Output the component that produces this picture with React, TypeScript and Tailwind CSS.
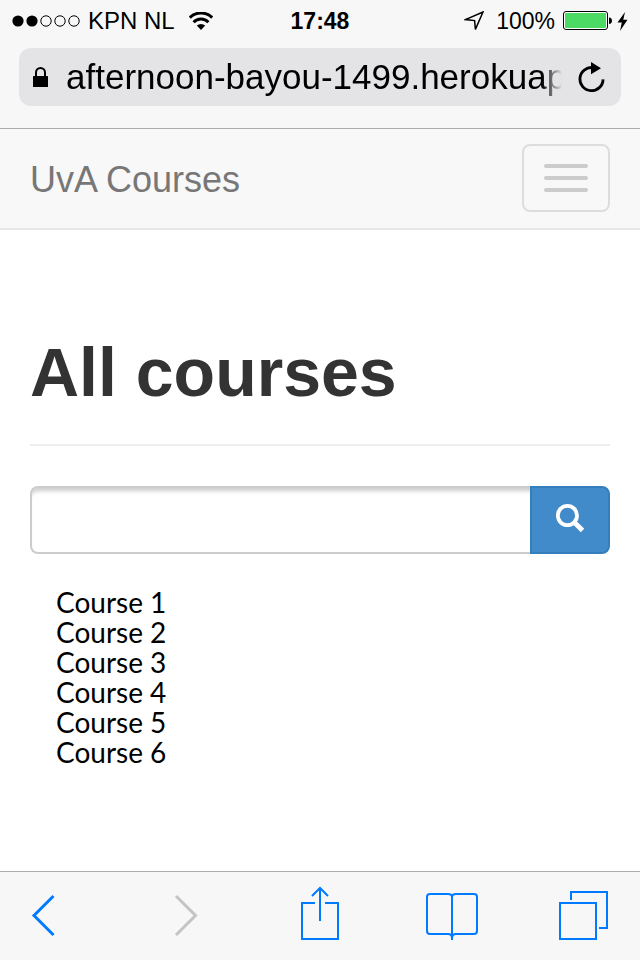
import React from "react";

const courses = ["Course 1", "Course 2", "Course 3", "Course 4", "Course 5", "Course 6"];

function SignalDots() {
  return (
    <svg width="68" height="12" viewBox="0 0 68 12" aria-hidden="true">
      <circle cx="6" cy="6" r="5.6" />
      <circle cx="20" cy="6" r="5.6" />
      <g fill="none" stroke="#000" strokeWidth="1">
        <circle cx="34" cy="6" r="5.2" />
        <circle cx="48" cy="6" r="5.2" />
        <circle cx="62" cy="6" r="5.2" />
      </g>
    </svg>
  );
}

function WifiIcon() {
  return (
    <svg width="24" height="18" viewBox="0 0 24 18" aria-hidden="true">
      <g fill="none" stroke="#000" strokeWidth="3">
        <path d="M0.8 5.6A16 16 0 0 1 23.2 5.6" />
        <path d="M4.6 10.2A10.4 10.4 0 0 1 19.4 10.2" />
      </g>
      <path d="M7.8 13.6A6 6 0 0 1 16.2 13.6L12 18Z" />
    </svg>
  );
}

function LocationIcon() {
  return (
    <svg width="20" height="20" viewBox="0 0 20 20" fill="none" stroke="#000" strokeWidth="1.5" aria-hidden="true">
      <path d="M19 1L1.5 8.6L10.6 9.6L11.4 18.4Z" />
    </svg>
  );
}

function BatteryIcon() {
  return (
    <svg width="50" height="20" viewBox="0 0 50 20" aria-hidden="true">
      <rect x="0.5" y="0.5" width="44" height="18" rx="2.5" fill="#fff" stroke="#000" />
      <rect x="2" y="2" width="41" height="15" rx="1" fill="#4cd964" />
      <path d="M46 6.5C50 6.5 50 13 46 13Z" />
    </svg>
  );
}

function BoltIcon() {
  return (
    <svg width="11" height="19" viewBox="0 0 11 19" aria-hidden="true">
      <path d="M8 0L0.5 10.5H4.8L3 19L10.5 7.8H6.3Z" />
    </svg>
  );
}

function LockIcon() {
  return (
    <svg width="15" height="20" viewBox="0 0 15 20" aria-hidden="true">
      <rect y="9" width="15" height="11" rx="0.6" />
      <path d="M3 10V5.5A4.5 4.5 0 0 1 12 5.5V10" fill="none" stroke="#000" strokeWidth="2" />
    </svg>
  );
}

function ReloadIcon() {
  return (
    <svg width="27" height="31" viewBox="0 0 27 31" aria-hidden="true">
      <path d="M15 5.6A11.6 11.6 0 1 0 25.1 17.4" fill="none" stroke="#000" strokeWidth="2.8" />
      <path d="M13 0L23 6.2L13 12.2Z" />
    </svg>
  );
}

function SearchIcon() {
  return (
    <svg width="28" height="28" viewBox="0 0 28 28" fill="none" stroke="#fff" aria-hidden="true">
      <circle cx="11.4" cy="11.5" r="9.6" strokeWidth="3.8" />
      <path d="M18 18L26.5 26.5" strokeWidth="4.8" />
    </svg>
  );
}

function ToolIcon({ children }: { children: React.ReactNode }) {
  return (
    <svg width="50" height="54" viewBox="0 0 50 54" fill="none" stroke="currentColor" strokeWidth="2" className="overflow-visible" aria-hidden="true">
      {children}
    </svg>
  );
}

export default function App() {
  return (
    <div className="flex min-h-screen flex-col bg-white font-['Liberation_Sans',Arial,sans-serif] text-black">
      <header className="border-b border-[#acacac] bg-[#f7f7f7] pb-[22px]">
        <div className="grid h-12 grid-cols-[1fr_auto_1fr] items-start px-3 pt-[9px]">
          <div className="flex h-6 items-center">
            <SignalDots />
            <span className="ml-2 mr-3.5 text-[24px] leading-6">KPN NL</span>
            <WifiIcon />
          </div>
          <time className="text-[23px] font-bold leading-6">17:48</time>
          <div className="flex h-6 items-center justify-end">
            <LocationIcon />
            <span className="ml-3 mr-2 text-[23px] leading-6">100%</span>
            <BatteryIcon />
            <span className="ml-1">
              <BoltIcon />
            </span>
          </div>
        </div>
        <div className="mx-[19px] flex h-[58px] items-center rounded-xl bg-[#e4e4e6] pl-3.5 pr-4">
          <LockIcon />
          <input
            type="text"
            readOnly
            aria-label="Address"
            value="afternoon-bayou-1499.herokuap"
            className="ml-[18px] mr-4 h-full min-w-0 flex-1 bg-transparent text-[35px] outline-none [mask-image:linear-gradient(to_left,transparent,black_20px)]"
          />
          <button type="button" aria-label="Reload">
            <ReloadIcon />
          </button>
        </div>
      </header>

      <nav className="flex items-center justify-between border-b-2 border-[#e7e7e7] bg-[#f8f8f8] px-[30px] pb-4 pt-[15px]">
        <a href="#" className="pt-1 text-[36px] leading-10 text-[#777]">UvA Courses</a>
        <button
          type="button"
          aria-label="Toggle navigation"
          className="flex h-[68px] w-[88px] flex-col items-center justify-center gap-2 rounded-lg border-2 border-[#ddd]"
        >
          <span className="h-1 w-11 rounded-sm bg-[#ccc]" />
          <span className="h-1 w-11 rounded-sm bg-[#ccc]" />
          <span className="h-1 w-11 rounded-sm bg-[#ccc]" />
        </button>
      </nav>

      <main className="flex-1 px-[30px] pt-[102px]">
        <h1 className="border-b-2 border-[#eee] pb-8 text-[68px] font-bold leading-[80px] text-[#333]">All courses</h1>
        <form className="mt-10 flex h-[68px]" onSubmit={(event) => event.preventDefault()}>
          <input
            type="text"
            aria-label="Search courses"
            className="min-w-0 flex-1 rounded-l-lg border-2 border-r-0 border-[#ccc] px-6 text-[28px] shadow-[inset_0_6px_4px_-3px_rgba(0,0,0,0.2)] outline-none"
          />
          <button
            type="submit"
            aria-label="Search"
            className="flex w-20 items-center justify-center rounded-r-lg border-2 border-[#357ebd] bg-[#428bca] pb-1"
          >
            <SearchIcon />
          </button>
        </form>
        <ul className="mt-[33px] pl-[26px] font-[Lato,sans-serif] text-[28px] leading-[30px]">
          {courses.map((course) => (
            <li key={course}>{course}</li>
          ))}
        </ul>
      </main>

      <footer className="flex items-center justify-between border-t border-[#acacac] bg-[#f7f7f7] px-8 pb-5 pt-3.5 text-[#007aff]">
        <button type="button" aria-label="Back">
          <ToolIcon>
            <path d="M21.5 10L2 29.5L21.5 49" strokeWidth="3" />
          </ToolIcon>
        </button>
        <button type="button" aria-label="Forward" disabled className="text-[#c4c4c4]">
          <ToolIcon>
            <path d="M12 10L31.5 29.5L12 49" strokeWidth="3" />
          </ToolIcon>
        </button>
        <button type="button" aria-label="Share">
          <ToolIcon>
            <path d="M20 17H7V53H43V17H30M25 35V3M17 10L25 2L33 10" />
          </ToolIcon>
        </button>
        <button type="button" aria-label="Bookmarks">
          <ToolIcon>
            <path d="M25 54V11Q25 8 21 8H3Q0 8 0 11V45Q0 48 3 48H21Q25 48 25 52Q25 48 29 48H47Q50 48 50 45V11Q50 8 47 8H29Q25 8 25 11" />
          </ToolIcon>
        </button>
        <button type="button" aria-label="Tabs">
          <ToolIcon>
            <path d="M2 17H38V53H2ZM13 14V6H49V42H41" />
          </ToolIcon>
        </button>
      </footer>
    </div>
  );
}
